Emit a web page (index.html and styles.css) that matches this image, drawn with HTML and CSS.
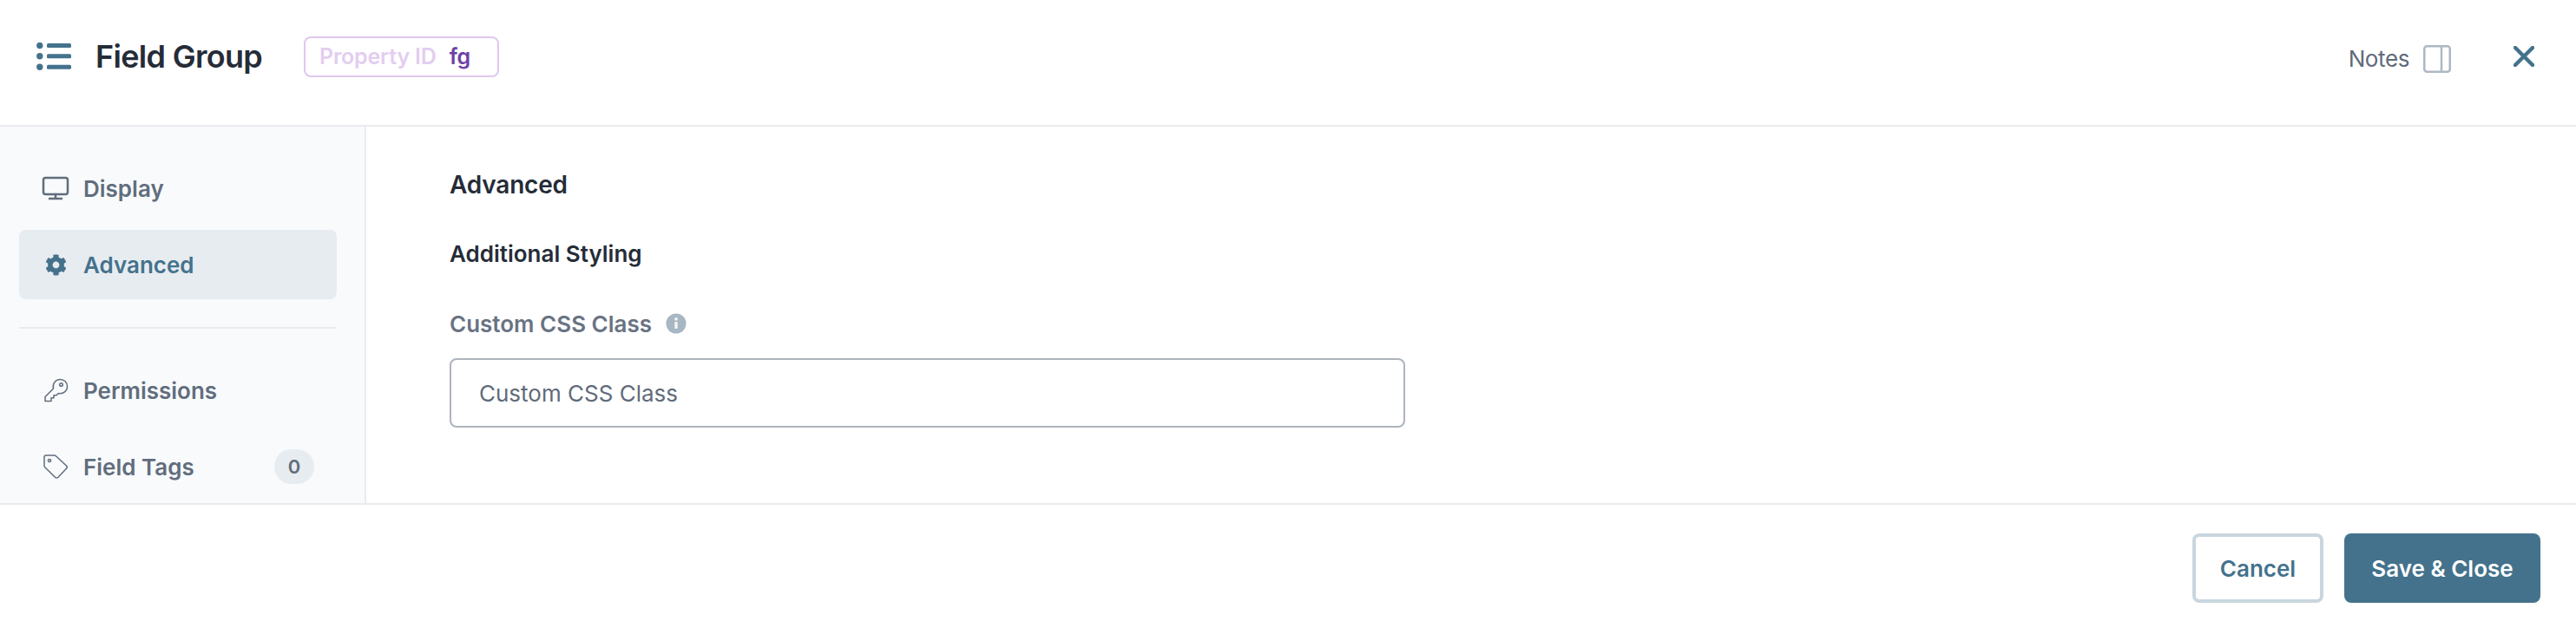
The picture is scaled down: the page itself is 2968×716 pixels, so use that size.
FILE: index.html
```html
<!DOCTYPE html>
<html lang="en">
<head>
  <meta charset="UTF-8">
  <title>Field Group</title>
  <link rel="stylesheet" href="styles.css">
</head>
<body>
  <div class="modal">
    <header class="top">
      <svg class="list-icon" width="40" height="32" viewBox="0 0 40 32">
        <circle cx="3.800" cy="3.500" r="3.700"/><circle cx="3.800" cy="15.800" r="3.700"/><circle cx="3.800" cy="28.200" r="3.700"/>
        <rect x="12" y="1" width="28" height="5" rx="1.500"/>
        <rect x="12" y="13.300" width="28" height="5" rx="1.500"/>
        <rect x="12" y="25.700" width="28" height="5" rx="1.500"/>
      </svg>
      <h1>Field Group</h1>
      <div class="prop-id"><span class="prop-label">Property ID</span><span class="prop-value">fg</span></div>
      <div class="top-right">
        <span class="notes">Notes</span>
        <svg class="panel-icon" width="32" height="32" viewBox="0 0 32 32">
          <rect x="1.250" y="1.250" width="29.500" height="29.500" rx="3"/><line x1="21" y1="1" x2="21" y2="31"/>
        </svg>
        <svg class="close-icon" width="24" height="24" viewBox="0 0 24 24">
          <path d="M2 2 L22 22 M22 2 L2 22"/>
        </svg>
      </div>
    </header>

    <div class="middle">
      <nav class="side">
        <a class="nav-item" href="#">
          <svg class="nav-icon" width="32" height="28" viewBox="0 0 32 28">
            <rect x="2" y="2" width="28" height="19" rx="2.500"/><path d="M16 21v5M9 26h14"/>
          </svg>
          Display
        </a>
        <a class="nav-item active" href="#">
          <span class="gear-box">
            <svg class="gear" width="25" height="25" viewBox="0 0 512 512">
              <path d="M487.400 315.700l-42.600-24.600c4.300-23.200 4.300-47 0-70.200l42.600-24.600c4.900-2.800 7.100-8.600 5.500-14-11.100-35.600-30-67.800-54.700-94.600-3.800-4.100-10-5.100-14.800-2.300L380.800 110c-17.900-15.400-38.500-27.300-60.800-35.100V25.800c0-5.600-3.900-10.500-9.400-11.700-36.700-8.200-74.300-7.800-109.200 0-5.500 1.200-9.400 6.100-9.400 11.700V75c-22.200 7.900-42.800 19.800-60.800 35.100L88.700 85.500c-4.900-2.800-11-1.900-14.800 2.300-24.700 26.700-43.600 58.900-54.700 94.600-1.700 5.400.6 11.200 5.500 14L67.300 221c-4.300 23.200-4.300 47 0 70.200l-42.600 24.600c-4.900 2.800-7.100 8.600-5.500 14 11.100 35.600 30 67.800 54.700 94.600 3.800 4.100 10 5.100 14.800 2.300l42.600-24.600c17.900 15.400 38.500 27.300 60.800 35.100v49.200c0 5.600 3.900 10.500 9.400 11.700 36.700 8.200 74.300 7.800 109.200 0 5.500-1.200 9.400-6.100 9.400-11.700v-49.200c22.200-7.900 42.800-19.800 60.800-35.100l42.600 24.600c4.900 2.800 11 1.900 14.800-2.300 24.700-26.700 43.600-58.900 54.700-94.600 1.500-5.500-.7-11.300-5.600-14.100zM256 336c-44.100 0-80-35.900-80-80s35.900-80 80-80 80 35.900 80 80-35.900 80-80 80z"/>
            </svg>
          </span>
          Advanced
        </a>
        <div class="side-rule"></div>
        <a class="nav-item" href="#">
          <svg class="nav-icon thin" width="32" height="28" viewBox="0 0 32 28">
            <path d="M4 26.500v-5l9.500-9.500c-1.300-5 2-10.500 8-10.500 4.500 0 8 3.500 8 8 0 5.800-5.300 9.300-10.300 8l-2.200 2.200h-3v3h-3v3.800z"/><circle cx="22.500" cy="7.500" r="1.800"/>
          </svg>
          Permissions
        </a>
        <a class="nav-item" href="#">
          <svg class="nav-icon thin" width="32" height="28" viewBox="0 0 32 28">
            <path d="M5 1h9c1 0 2 .4 2.700 1l11.800 11c1 1 1 2.200 0 3.200l-9.500 10c-1 1-2.500 1-3.500 0L4 15c-.7-.7-1-1.500-1-2.300V3c0-1.200 1-2 2-2z"/><circle cx="9" cy="7" r="1.600"/>
          </svg>
          Field Tags
          <span class="count">0</span>
        </a>
      </nav>

      <main class="content">
        <h2>Advanced</h2>
        <h3>Additional Styling</h3>
        <div class="field">
          <label class="field-label" for="cssClass">Custom CSS Class
            <svg class="info-icon" width="24" height="24" viewBox="0 0 24 24">
              <circle cx="12" cy="12" r="11.500"/><rect x="10.300" y="10" width="3.400" height="8" rx="1" class="dot"/><circle cx="12" cy="6.800" r="1.900" class="dot"/>
            </svg>
          </label>
          <input id="cssClass" type="text" placeholder="Custom CSS Class">
        </div>
      </main>
    </div>

    <footer class="bottom">
      <button class="btn btn-cancel" type="button">Cancel</button>
      <button class="btn btn-save" type="button">Save &amp; Close</button>
    </footer>
  </div>
</body>
</html>
```

FILE: styles.css
```css
* {
  box-sizing: border-box;
}

html, body {
  margin: 0;
  height: 100%;
  background-color: #fff;
}

body {
  font-family: Inter, "Liberation Sans", sans-serif;
  color: #252c38;
  overflow: hidden;
}

.modal {
  display: flex;
  flex-direction: column;
  height: 716px;
}

.top {
  display: flex;
  align-items: center;
  height: 146px;
  flex: none;
  padding: 0 48px 14px 42px;
  border-bottom: 2px solid #e9ebee;
}

.list-icon {
  flex: none;
  fill: #44728c;
}

h1 {
  width: 190px;
  margin: 0 50px 0 28px;
  font-size: 36px;
  font-weight: 600;
  letter-spacing: -0.7px;
  white-space: nowrap;
}

.prop-id {
  display: flex;
  align-items: center;
  gap: 15px;
  width: 225px;
  height: 47px;
  padding: 0 16px;
  border: 2px solid #dfc8ee;
  border-radius: 8px;
  font-size: 25px;
  font-weight: 600;
  letter-spacing: -0.2px;
  white-space: nowrap;
}

.prop-label {
  color: #e3cdf0;
}

.prop-value {
  color: #6d40a6;
}

.top-right {
  display: flex;
  align-items: center;
  margin-left: auto;
}

.notes {
  margin: 5px 16px 0 0;
  font-size: 26px;
  letter-spacing: -0.4px;
  color: #5f6b7a;
}

.panel-icon {
  margin-top: 5px;
  fill: none;
  stroke: #aeb8c3;
  stroke-width: 2.500;
}

.close-icon {
  margin-left: 72px;
  fill: none;
  stroke: #44728c;
  stroke-width: 4.500;
  stroke-linecap: round;
}

.middle {
  display: flex;
  flex: 1;
  min-height: 0;
}

.side {
  flex: none;
  width: 422px;
  padding: 31px 32px 0 22px;
  background-color: #f8fafc;
  border-right: 2px solid #e9ebee;
  overflow: hidden;
}

.nav-item {
  display: flex;
  align-items: center;
  height: 80px;
  padding: 0 26px;
  border-radius: 8px;
  font-size: 26px;
  font-weight: 600;
  color: #616d7c;
  text-decoration: none;
}

.nav-item + .nav-item {
  margin-top: 8px;
}

.nav-item.active {
  background-color: #e7ecf0;
  color: #44728c;
}

.nav-icon {
  flex: none;
  margin-right: 16px;
  fill: none;
  stroke: #616d7c;
  stroke-width: 2.500;
  stroke-linejoin: round;
  stroke-linecap: round;
}

.nav-icon.thin {
  stroke-width: 1.500;
}

.gear-box {
  display: flex;
  justify-content: center;
  flex: none;
  width: 32px;
  margin-right: 16px;
}

.gear {
  fill: #44728c;
}

.side-rule {
  height: 2px;
  margin: 32px 0 31px;
  background-color: #e9ebee;
}

.count {
  display: flex;
  align-items: center;
  justify-content: center;
  width: 46px;
  height: 40px;
  margin-left: auto;
  border-radius: 20px;
  background-color: #e7ecf0;
  font-size: 22px;
}

.content {
  flex: 1;
  padding: 48px 0 0 96px;
}

h2 {
  margin: 0;
  font-size: 28px;
  line-height: 38px;
  font-weight: 600;
  letter-spacing: -0.2px;
}

h3 {
  margin: 41px 0 0;
  font-size: 26px;
  line-height: 40px;
  font-weight: 600;
}

.field {
  margin-top: 40px;
}

.field-label {
  display: flex;
  align-items: center;
  gap: 16px;
  height: 40px;
  font-size: 26px;
  font-weight: 600;
  color: #687383;
}

.info-icon {
  fill: #a9b6c3;
}

.info-icon .dot {
  fill: #f3f5f7;
}

input {
  display: block;
  width: 1101px;
  height: 80px;
  margin-top: 20px;
  padding: 0 32px;
  border: 2px solid #aeb4bc;
  border-radius: 8px;
  font-family: inherit;
  font-size: 26px;
  background-color: #fff;
}

input::placeholder {
  color: #5f6b7a;
  opacity: 1;
}

.bottom {
  display: flex;
  justify-content: flex-end;
  align-items: flex-start;
  gap: 24px;
  flex: none;
  height: 136px;
  padding: 33px 41px 0 0;
  border-top: 2px solid #e9ebee;
}

.btn {
  height: 80px;
  border-radius: 8px;
  font-family: inherit;
  font-size: 26px;
  font-weight: 600;
}

.btn-cancel {
  width: 151px;
  background-color: #fff;
  border: 4px solid #c9d6de;
  color: #44728c;
}

.btn-save {
  width: 226px;
  background-color: #44728c;
  border: none;
  color: #fff;
}
```
